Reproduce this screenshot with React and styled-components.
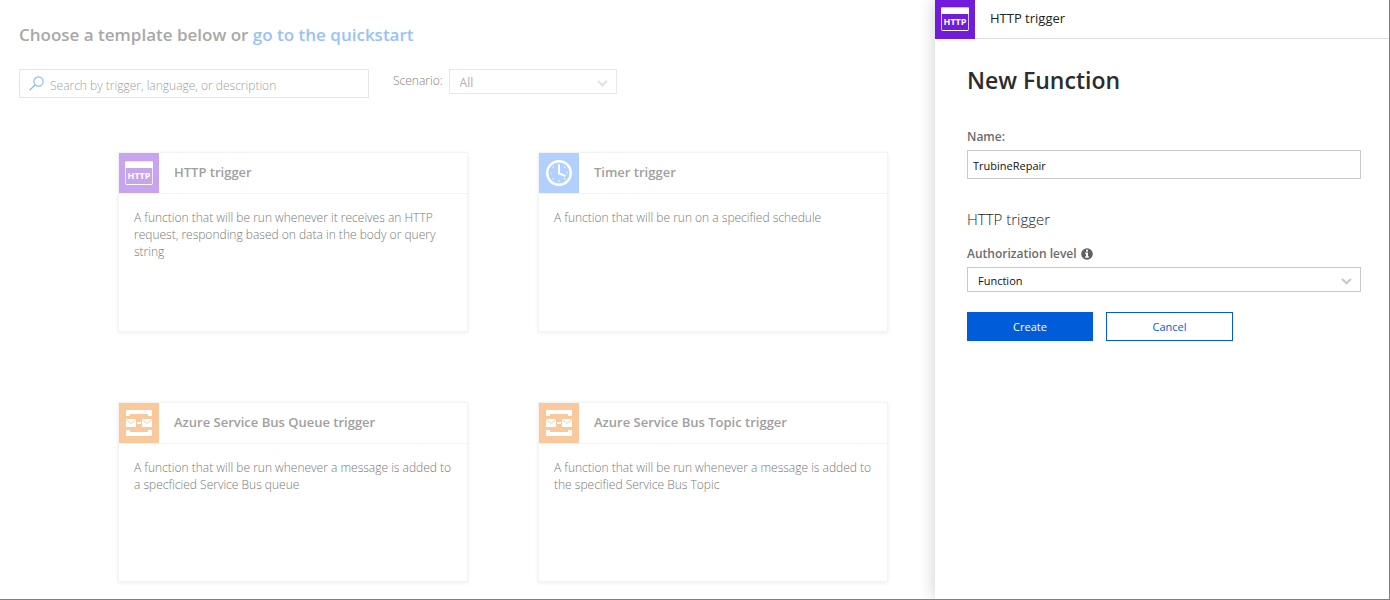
import React from "react";
import styled, { createGlobalStyle } from "styled-components";

const GlobalStyle = createGlobalStyle`
  *, *::before, *::after { box-sizing: border-box; }
  body {
    margin: 0;
    background: #fff;
    font-family: "Open Sans", "Noto Sans", sans-serif;
    font-size: 12px;
  }
  button, input, select { font: inherit; }
`;

const Page = styled.div`
  display: flex;
  min-height: 100vh;
  border-right: 1px solid #808080;
  border-bottom: 1px solid #808080;
`;

const Gallery = styled.main`
  flex: 1;
  min-width: 0;
  padding: 23px 19px 17px;
`;

const Heading = styled.h1`
  margin: 0;
  font-size: 17px;
  line-height: 24px;
  font-weight: 600;
  color: #a8a8a8;
`;

const QuickstartLink = styled.a`
  color: #99c2f8;
  text-decoration: none;
`;

const Filters = styled.div`
  display: flex;
  align-items: flex-start;
  flex-wrap: wrap;
  gap: 24px;
  margin-top: 22px;
`;

const SearchBox = styled.label`
  display: flex;
  align-items: center;
  gap: 6px;
  width: 350px;
  height: 29px;
  padding: 0 9px;
  border: 1px solid #e6e6e6;
`;

const SearchInput = styled.input`
  flex: 1;
  min-width: 0;
  height: 27px;
  padding: 3px 0 0;
  border: 0;
  outline: 0;
  background: transparent;
  color: #999;
  font-size: 12px;
  font-weight: 300;
  &::placeholder { color: #a0a0a0; opacity: 1; }
`;

const ScenarioField = styled.div`
  display: flex;
  gap: 6px;
`;

const ScenarioLabel = styled.label`
  font-weight: 300;
  line-height: 24px;
  color: #808080;
`;

const SelectFrame = styled.div`
  display: grid;
  width: ${(p) => p.$width};
  height: 25px;
  border: 1px solid ${(p) => (p.$faded ? "#e8e8e8" : "#c8c8c8")};
  color: ${(p) => (p.$faded ? "#e2e2e2" : "#c8c8c8")};
  > * { grid-area: 1 / 1; }
  > svg {
    align-self: center;
    justify-self: end;
    margin: 4px 8px 0 0;
    pointer-events: none;
  }
`;

const Select = styled.select`
  appearance: none;
  width: 100%;
  height: 100%;
  padding: 2px 24px 0 10px;
  border: 0;
  border-radius: 0;
  outline: 0;
  background: transparent;
  color: ${(p) => (p.$faded ? "#b0b0b0" : "#111")};
  font-size: ${(p) => (p.$faded ? "12px" : "11px")};
`;

const Cards = styled.div`
  display: grid;
  grid-template-columns: repeat(auto-fill, 350px);
  gap: 70px;
  margin: 54px 0 0 99px;
`;

const CardFrame = styled.article`
  height: 180px;
  border: 1px solid #f3f3f3;
  box-shadow: 0 1px 4px rgba(0, 0, 0, 0.07);
`;

const CardHeader = styled.header`
  display: flex;
  align-items: flex-start;
  gap: 15px;
  border-bottom: 1px solid #f3f3f3;
`;

const CardTitle = styled.h2`
  margin: 0;
  font-size: 13px;
  line-height: 38px;
  font-weight: 600;
  color: #a0a0a0;
`;

const CardText = styled.p`
  margin: 0;
  padding: 15px;
  font-size: 12px;
  line-height: 17px;
  font-weight: 300;
  color: #787878;
`;

const Tile = styled.svg`
  display: block;
  flex: none;
`;

const Panel = styled.aside`
  flex: none;
  width: 454px;
  background: #fff;
  box-shadow: 0 0 16px rgba(0, 0, 0, 0.2);
  clip-path: inset(0 0 0 -20px);
`;

const PanelHeader = styled.header`
  display: flex;
  height: 39px;
  overflow: hidden;
  align-items: flex-end;
`;

const PanelHeaderTitle = styled.div`
  flex: 1;
  height: 39px;
  padding-left: 15px;
  border-bottom: 1px solid #e0e0e0;
  font-size: 13px;
  line-height: 36px;
  color: #222;
`;

const Form = styled.form`
  display: flex;
  flex-direction: column;
  padding: 23px 28px 24px 32px;
`;

const FormTitle = styled.h2`
  margin: 0;
  font-size: 23px;
  line-height: 36px;
  font-weight: 600;
  color: #2c2c2c;
`;

const FieldLabel = styled.label`
  display: flex;
  align-items: center;
  gap: 4px;
  margin-top: ${(p) => p.$top};
  margin-bottom: 3px;
  font-size: 12px;
  line-height: 20px;
  font-weight: 600;
  color: #6c6c6c;
`;

const NameInput = styled.input`
  width: 100%;
  height: 29px;
  padding: 2px 5px 0;
  border: 1px solid #c8c8c8;
  border-radius: 0;
  outline: 0;
  color: #111;
  font-size: 11px;
`;

const SectionTitle = styled.h3`
  margin: 28px 0 0;
  font-size: 15px;
  line-height: 24px;
  font-weight: 300;
  color: #222;
`;

const Actions = styled.div`
  display: flex;
  gap: 13px;
  margin-top: 20px;
`;

const Button = styled.button`
  width: ${(p) => (p.$primary ? "126px" : "127px")};
  height: 29px;
  padding: 0;
  border: 1px solid #015cda;
  background: ${(p) => (p.$primary ? "#015cda" : "#fff")};
  color: ${(p) => (p.$primary ? "#fff" : "#015cda")};
  font-size: 11px;
  cursor: pointer;
`;

function SearchIcon() {
  return (
    <svg width="15" height="15" viewBox="0 0 15 15" fill="none" stroke="#8fbcf5" aria-hidden="true">
      <circle cx="9.5" cy="5.5" r="4.6" strokeWidth="1.2" />
      <path d="M6.2 8.8 L0.6 14.2" strokeWidth="1.4" />
    </svg>
  );
}

function Chevron() {
  return (
    <svg width="11" height="7" viewBox="0 0 11 7" fill="none" stroke="currentColor" aria-hidden="true">
      <path d="M1 1 L5.5 5.2 L10 1" strokeWidth="2.2" />
    </svg>
  );
}

function InfoIcon() {
  return (
    <svg width="12" height="12" viewBox="0 0 12 12" aria-hidden="true">
      <circle cx="6" cy="6" r="5.8" fill="#606060" />
      <path d="M5 1.8h2v1.7H5z M4.2 4.6H7v3.6h.8v1.5H4.2V8.2H5V6H4.2z" fill="#fff" />
    </svg>
  );
}

function HttpTile({ color }) {
  return (
    <Tile width="40" height="40" viewBox="0 0 40 40" aria-hidden="true">
      <rect width="40" height="40" fill={color} />
      <rect x="6.5" y="9" width="27" height="22.5" rx="1" fill="none" stroke="#fff" strokeOpacity="0.75" />
      <path d="M6 8.5h28v6.5H6z M7 31h26v1H7z" fill="#fff" />
      <text x="20" y="26" textAnchor="middle" fontSize="9" fontWeight="700" fill="#fff">HTTP</text>
    </Tile>
  );
}

function TimerTile() {
  return (
    <Tile width="40" height="40" viewBox="0 0 40 40" aria-hidden="true">
      <rect width="40" height="40" fill="#b1cfff" />
      <circle cx="20" cy="20" r="11.8" fill="none" stroke="#fff" strokeWidth="2.4" />
      <path d="M20 11.2V20.4L26.4 23" fill="none" stroke="#fff" strokeWidth="2" />
      <g fill="#fff">
        <circle cx="14.3" cy="14.3" r="0.7" />
        <circle cx="25.7" cy="14.3" r="0.7" />
        <circle cx="14.3" cy="25.7" r="0.7" />
        <circle cx="25.7" cy="25.7" r="0.7" />
        <circle cx="12" cy="20" r="0.8" opacity="0.6" />
        <circle cx="28" cy="20" r="0.8" opacity="0.6" />
        <circle cx="20" cy="28" r="0.9" opacity="0.6" />
      </g>
    </Tile>
  );
}

function BusTile() {
  return (
    <Tile width="40" height="40" viewBox="0 0 40 40" aria-hidden="true">
      <rect width="40" height="40" fill="#f9c99b" />
      <g fill="#fff">
        <path d="M8 7h24q1 0 1 1v5h-4v-2H11v2H7V8q0-1 1-1z" />
        <path d="M8 33h24q1 0 1-1v-5h-4v2H11v-2H7v5q0 1 1 1z" />
        <rect x="7" y="16" width="10" height="8" rx="0.6" />
        <rect x="23" y="16" width="10" height="8" rx="0.6" />
        <rect x="18" y="19" width="4" height="2" />
      </g>
      <path d="M7.5 17 L12 20.4 L16.5 17 M23.5 17 L28 20.4 L32.5 17" fill="none" stroke="#f9c99b" strokeWidth="0.9" />
    </Tile>
  );
}

const templates = [
  {
    title: "HTTP trigger",
    icon: <HttpTile color="#c8a4ef" />,
    text: "A function that will be run whenever it receives an HTTP request, responding based on data in the body or query string",
  },
  {
    title: "Timer trigger",
    icon: <TimerTile />,
    text: "A function that will be run on a specified schedule",
  },
  {
    title: "Azure Service Bus Queue trigger",
    icon: <BusTile />,
    text: "A function that will be run whenever a message is added to a specficied Service Bus queue",
  },
  {
    title: "Azure Service Bus Topic trigger",
    icon: <BusTile />,
    text: "A function that will be run whenever a message is added to the specified Service Bus Topic",
  },
];

function TemplateCard({ title, icon, text }) {
  return (
    <CardFrame>
      <CardHeader>
        {icon}
        <CardTitle>{title}</CardTitle>
      </CardHeader>
      <CardText>{text}</CardText>
    </CardFrame>
  );
}

export default function App() {
  return (
    <>
      <GlobalStyle />
      <Page>
        <Gallery>
          <Heading>
            Choose a template below or <QuickstartLink href="#quickstart">go to the quickstart</QuickstartLink>
          </Heading>
          <Filters>
            <SearchBox>
              <SearchIcon />
              <SearchInput
                type="text"
                aria-label="Search templates"
                placeholder="Search by trigger, language, or description"
              />
            </SearchBox>
            <ScenarioField>
              <ScenarioLabel htmlFor="scenario">Scenario:</ScenarioLabel>
              <SelectFrame $faded $width="168px">
                <Select $faded id="scenario" defaultValue="All">
                  <option>All</option>
                </Select>
                <Chevron />
              </SelectFrame>
            </ScenarioField>
          </Filters>
          <Cards>
            {templates.map((t) => (
              <TemplateCard key={t.title} {...t} />
            ))}
          </Cards>
        </Gallery>
        <Panel>
          <PanelHeader>
            <HttpTile color="#731bda" />
            <PanelHeaderTitle>HTTP trigger</PanelHeaderTitle>
          </PanelHeader>
          <Form onSubmit={(e) => e.preventDefault()}>
            <FormTitle>New Function</FormTitle>
            <FieldLabel $top="29px" htmlFor="name">Name:</FieldLabel>
            <NameInput id="name" type="text" defaultValue="TrubineRepair" />
            <SectionTitle>HTTP trigger</SectionTitle>
            <FieldLabel $top="13px" htmlFor="auth">
              Authorization level <InfoIcon />
            </FieldLabel>
            <SelectFrame $width="100%">
              <Select id="auth" defaultValue="Function">
                <option>Function</option>
              </Select>
              <Chevron />
            </SelectFrame>
            <Actions>
              <Button $primary type="submit">Create</Button>
              <Button type="button">Cancel</Button>
            </Actions>
          </Form>
        </Panel>
      </Page>
    </>
  );
}
